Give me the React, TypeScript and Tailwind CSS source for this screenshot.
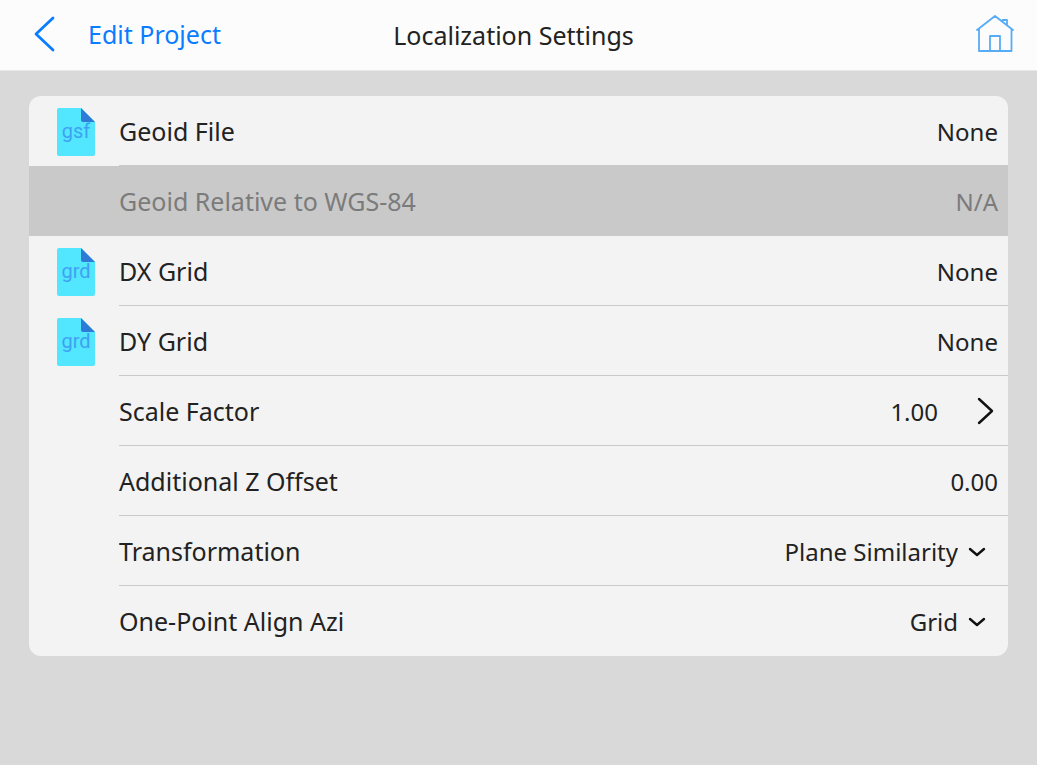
import { useState } from 'react'
import type { ReactNode } from 'react'

function FileIcon({ ext }: { ext: string }) {
  return (
    <svg viewBox="0 0 38 48" className="h-12 w-[38px]" aria-hidden="true">
      <path d="M2 0H24L38 14V46a2 2 0 0 1-2 2H2a2 2 0 0 1-2-2V2a2 2 0 0 1 2-2Z" fill="#53e6ff" />
      <path d="M24 0 38 14H26a2 2 0 0 1-2-2Z" fill="#2d7bd6" />
      <text x="19" y="30" textAnchor="middle" fontSize="20" fontFamily="Roboto, sans-serif" fill="#3ea2f3">
        {ext}
      </text>
    </svg>
  )
}

function ChevronDown() {
  return (
    <svg viewBox="0 0 18 10" className="h-[10px] w-[18px]" fill="none" stroke="#111" strokeWidth="2.4" strokeLinecap="round" strokeLinejoin="round" aria-hidden="true">
      <path d="M2 2 9 8 16 2" />
    </svg>
  )
}

function Row({ label, htmlFor, ext, disabled = false, last = false, children }: {
  label: string
  htmlFor: string
  ext?: string
  disabled?: boolean
  last?: boolean
  children: ReactNode
}) {
  return (
    <div className={`flex h-[70px] pl-7 ${disabled ? 'bg-[#c9c9c9] text-[#7b7b7b]' : ''}`}>
      <div className="flex w-[62px] shrink-0 items-center pt-0.5">{ext && <FileIcon ext={ext} />}</div>
      <div className={`flex flex-1 items-center justify-between border-b pt-0.5 pr-[10px] ${last ? 'border-transparent' : 'border-[#c9c9c9]'}`}>
        <label htmlFor={htmlFor} className="text-[25px]">{label}</label>
        {children}
      </div>
    </div>
  )
}

function SelectField({ id, value, options, onChange }: {
  id: string
  value: string
  options: string[]
  onChange: (value: string) => void
}) {
  return (
    <div className="relative mr-3 flex items-center">
      <select
        id={id}
        value={value}
        onChange={e => onChange(e.target.value)}
        className="field-sizing-content appearance-none bg-transparent pr-7 outline-none"
      >
        {options.map(option => (
          <option key={option}>{option}</option>
        ))}
      </select>
      <span className="pointer-events-none absolute right-0">
        <ChevronDown />
      </span>
    </div>
  )
}

export default function App() {
  const [zOffset, setZOffset] = useState('0.00')
  const [transformation, setTransformation] = useState('Plane Similarity')
  const [alignAzi, setAlignAzi] = useState('Grid')

  return (
    <div className="min-h-screen bg-[#d9d9d9] font-['Noto_Sans',sans-serif] text-2xl text-[#222]">
      <header className="flex h-[71px] items-center border-b border-[#e8e8e8] bg-[#fcfcfc] pr-[22px] pl-3">
        <div className="flex flex-1">
          <button type="button" className="flex items-center gap-8 pl-5 text-[25px] text-[#0a7cff]">
            <svg viewBox="0 0 24 38" className="h-[38px] w-6" fill="none" stroke="currentColor" strokeWidth="2.8" strokeLinecap="round" strokeLinejoin="round" aria-hidden="true">
              <path d="M21 2 4 18 21 34" />
            </svg>
            Edit Project
          </button>
        </div>
        <h1 className="pt-0.5 text-[25px]">Localization Settings</h1>
        <div className="flex flex-1 justify-end">
          <button type="button" aria-label="Home">
            <svg viewBox="0 0 40 40" className="size-10" fill="none" stroke="#58acf5" strokeWidth="1.8" strokeLinejoin="round" strokeLinecap="round" aria-hidden="true">
              <path d="M2 15 20 1 38 15M4 14V36H36.5V14M15 36V21H25V36M27.500 6.500V5H32V10" />
            </svg>
          </button>
        </div>
      </header>

      <main className="px-[29px] pt-[25px]">
        <div className="overflow-hidden rounded-xl bg-[#f3f3f3]">
          <Row label="Geoid File" htmlFor="geoid-file" ext="gsf">
            <button id="geoid-file" type="button">None</button>
          </Row>
          <Row label="Geoid Relative to WGS-84" htmlFor="geoid-relative" disabled>
            <button id="geoid-relative" type="button" disabled>N/A</button>
          </Row>
          <Row label="DX Grid" htmlFor="dx-grid" ext="grd">
            <button id="dx-grid" type="button">None</button>
          </Row>
          <Row label="DY Grid" htmlFor="dy-grid" ext="grd">
            <button id="dy-grid" type="button">None</button>
          </Row>
          <Row label="Scale Factor" htmlFor="scale-factor">
            <button id="scale-factor" type="button" className="flex items-center gap-9">
              1.00
              <svg viewBox="0 0 24 30" className="h-[30px] w-6" fill="none" stroke="#111" strokeWidth="2.4" strokeLinecap="round" strokeLinejoin="round" aria-hidden="true">
                <path d="M5 2 18 14 5 26" />
              </svg>
            </button>
          </Row>
          <Row label="Additional Z Offset" htmlFor="z-offset">
            <input
              id="z-offset"
              value={zOffset}
              onChange={e => setZOffset(e.target.value)}
              className="w-40 bg-transparent text-right outline-none"
            />
          </Row>
          <Row label="Transformation" htmlFor="transformation">
            <SelectField
              id="transformation"
              value={transformation}
              options={['Plane Similarity', 'Plane Affine']}
              onChange={setTransformation}
            />
          </Row>
          <Row label="One-Point Align Azi" htmlFor="align-azi" last>
            <SelectField id="align-azi" value={alignAzi} options={['Grid', 'Geodetic']} onChange={setAlignAzi} />
          </Row>
        </div>
      </main>
    </div>
  )
}
